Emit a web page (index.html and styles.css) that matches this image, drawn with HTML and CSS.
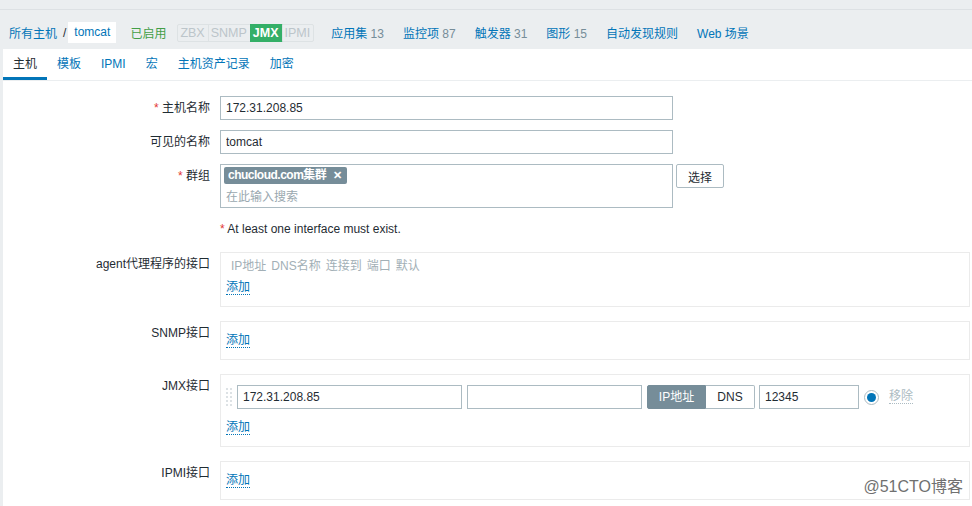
FILE: index.html
```html
<!DOCTYPE html>
<html lang="zh-CN">
<head>
    <meta charset="UTF-8">
    <title>主机</title>
    <link rel="stylesheet" href="styles.css">
</head>
<body>
    <div class="top-line"></div>
    <div class="header-nav">
        <a class="crumb" href="#">所有主机</a>
        <span class="crumb-sep">/</span>
        <span class="crumb-current">tomcat</span>
        <span class="status-on">已启用</span>
        <span class="avail">
            <span class="avail-item">ZBX</span>
            <span class="avail-item">SNMP</span>
            <span class="avail-item on">JMX</span>
            <span class="avail-item">IPMI</span>
        </span>
        <a class="nav-link" href="#">应用集 <span class="count">13</span></a>
        <a class="nav-link" href="#">监控项 <span class="count">87</span></a>
        <a class="nav-link" href="#">触发器 <span class="count">31</span></a>
        <a class="nav-link" href="#">图形 <span class="count">15</span></a>
        <a class="nav-link" href="#">自动发现规则</a>
        <a class="nav-link" href="#">Web 场景</a>
    </div>

    <div class="panel">
        <ul class="tabs">
            <li class="active">主机</li>
            <li>模板</li>
            <li>IPMI</li>
            <li>宏</li>
            <li>主机资产记录</li>
            <li>加密</li>
        </ul>

        <div class="form">
            <div class="form-row">
                <label class="form-label"><span class="req">*</span> 主机名称</label>
                <input class="text-input wide" type="text" value="172.31.208.85">
            </div>
            <div class="form-row">
                <label class="form-label">可见的名称</label>
                <input class="text-input wide" type="text" value="tomcat">
            </div>
            <div class="form-row">
                <label class="form-label"><span class="req">*</span> 群组</label>
                <div class="multiselect">
                    <span class="tag">chucloud.com集群 <span class="tag-x">✕</span></span>
                    <span class="placeholder">在此输入搜索</span>
                </div>
                <button class="btn-select">选择</button>
            </div>
            <div class="form-row msg-row">
                <span class="form-label"></span>
                <span class="msg"><span class="req">*</span> At least one interface must exist.</span>
            </div>

            <div class="form-row iface-row">
                <label class="form-label top">agent代理程序的接口</label>
                <div class="iface-box">
                    <div class="iface-head">
                        <span>IP地址</span><span>DNS名称</span><span>连接到</span><span>端口</span><span>默认</span>
                    </div>
                    <div class="add-row"><a class="link-add" href="#">添加</a></div>
                </div>
            </div>
            <div class="form-row iface-row">
                <label class="form-label top">SNMP接口</label>
                <div class="iface-box">
                    <div class="add-row"><a class="link-add" href="#">添加</a></div>
                </div>
            </div>
            <div class="form-row iface-row">
                <label class="form-label top">JMX接口</label>
                <div class="iface-box">
                    <div class="iface-line">
                        <svg class="drag" width="7" height="20" viewBox="0 0 7 20">
                            <g fill="#dde2e5">
                                <rect x="0" y="1" width="2" height="2"/><rect x="4" y="1" width="2" height="2"/>
                                <rect x="0" y="5" width="2" height="2"/><rect x="4" y="5" width="2" height="2"/>
                                <rect x="0" y="9" width="2" height="2"/><rect x="4" y="9" width="2" height="2"/>
                                <rect x="0" y="13" width="2" height="2"/><rect x="4" y="13" width="2" height="2"/>
                                <rect x="0" y="17" width="2" height="2"/><rect x="4" y="17" width="2" height="2"/>
                            </g>
                        </svg>
                        <input class="text-input ip" type="text" value="172.31.208.85">
                        <input class="text-input dns" type="text" value="">
                        <span class="seg">
                            <span class="seg-item on">IP地址</span>
                            <span class="seg-item">DNS</span>
                        </span>
                        <input class="text-input port" type="text" value="12345">
                        <span class="radio"><span class="radio-dot"></span></span>
                        <a class="link-remove" href="#">移除</a>
                    </div>
                    <div class="add-row"><a class="link-add" href="#">添加</a></div>
                </div>
            </div>
            <div class="form-row iface-row">
                <label class="form-label top">IPMI接口</label>
                <div class="iface-box">
                    <div class="add-row"><a class="link-add" href="#">添加</a></div>
                </div>
            </div>
        </div>
    </div>

    <div class="watermark">@51CTO博客</div>
</body>
</html>
```

FILE: styles.css
```css
body {
    font-family: "Liberation Sans", Arial, "Noto Sans CJK SC", sans-serif;
    font-size: 12px;
    color: #1f2c33;
    margin: 0;
    padding: 0;
    background-color: #ebeef0;
    height: 506px;
    overflow: hidden;
}
a {
    color: #0275b8;
    text-decoration: none;
}
.top-line {
    height: 9px;
    border-bottom: 1px solid #dde1e4;
}
.header-nav {
    display: flex;
    align-items: center;
    height: 21px;
    padding: 12px 0 6px 9px;
    white-space: nowrap;
}
.crumb-sep {
    margin: 0 2px 0 6px;
}
.crumb-current {
    background-color: #fff;
    color: #0275b8;
    height: 21px;
    line-height: 21px;
    padding: 0 6px;
}
.status-on {
    color: #429e47;
    margin-left: 14px;
}
.avail {
    display: flex;
    margin-left: 11px;
    margin-right: 17px;
}
.avail-item {
    height: 16px;
    line-height: 16px;
    padding: 0 3px 0 2px;
    border: 1px solid #dde2e4;
    margin-left: -1px;
    color: #bcc5ca;
    background-color: #ebeef0;
    font-size: 12.5px;
}
.avail-item:first-child {
    margin-left: 0;
    border-radius: 2px 0 0 2px;
}
.avail-item:last-child {
    border-radius: 0 2px 2px 0;
}
.avail-item.on {
    background-color: #34af67;
    border-color: #34af67;
    color: #fff;
    font-weight: bold;
}
.nav-link {
    margin-right: 19px;
}
.count {
    color: #768d99;
}
.panel {
    margin-left: 3px;
    background-color: #fff;
    height: 460px;
}
.tabs {
    list-style: none;
    margin: 0;
    padding: 0;
    display: flex;
    height: 31px;
    border-bottom: 1px solid #ebeef0;
}
.tabs li {
    padding: 0 10px;
    line-height: 31px;
    color: #0275b8;
    border-bottom: 3px solid transparent;
    height: 28px;
}
.tabs li.active {
    color: #1f2c33;
    border-bottom-color: #0275b8;
}
.form {
    padding-top: 15px;
}
.form-row {
    display: flex;
    align-items: flex-start;
    margin-bottom: 10px;
}
.form-label {
    width: 207px;
    flex: none;
    padding-right: 10px;
    text-align: right;
    line-height: 24px;
}
.form-label.top {
    line-height: 14px;
    padding-top: 5px;
}
.req {
    color: #e33734;
}
.text-input {
    box-sizing: border-box;
    height: 24px;
    border: 1px solid #acbbc2;
    padding: 0 5px;
    font-family: inherit;
    font-size: 12px;
    color: #1f2c33;
    background-color: #fff;
    outline: none;
    margin: 0;
}
.wide {
    width: 453px;
}
.multiselect {
    box-sizing: border-box;
    width: 453px;
    height: 44px;
    border: 1px solid #acbbc2;
    padding: 2px 3px;
    display: flex;
    flex-direction: column;
    align-items: flex-start;
}
.tag {
    background-color: #768d99;
    color: #fff;
    font-weight: bold;
    letter-spacing: -0.5px;
    height: 17px;
    line-height: 17px;
    padding: 0 5px 0 4px;
    border-radius: 2px;
}
.tag-x {
    margin-left: 4px;
    font-size: 11px;
    letter-spacing: 0;
}
.placeholder {
    color: #9aa8af;
    margin: 3px 0 0 2px;
}
.btn-select {
    margin-left: 3px;
    width: 48px;
    height: 24px;
    background-color: #fff;
    border: 1px solid #acbbc2;
    border-radius: 2px;
    font-family: inherit;
    font-size: 12px;
    color: #1f2c33;
    padding: 0;
}
.msg-row {
    height: 24px;
    line-height: 23px;
}
.iface-row {
    margin-bottom: 14px;
}
.iface-box {
    flex: 1;
    margin-right: 2px;
    border: 1px solid #ebebeb;
    padding: 5px;
}
.iface-head {
    display: flex;
    gap: 5px;
    height: 16px;
    line-height: 16px;
    padding-left: 5px;
    color: #a2afb6;
}
.add-row {
    height: 27px;
    display: flex;
    align-items: center;
}
.link-add {
    border-bottom: 1px dotted #0275b8;
    line-height: 13px;
}
.iface-line {
    display: flex;
    align-items: center;
    height: 34px;
}
.drag {
    margin-right: 4px;
}
.ip {
    width: 225px;
}
.dns {
    width: 175px;
    margin-left: 5px;
}
.seg {
    display: flex;
    margin-left: 5px;
}
.seg-item {
    box-sizing: border-box;
    height: 24px;
    line-height: 22px;
    width: 49px;
    text-align: center;
    border: 1px solid #acbbc2;
    border-left: none;
    border-radius: 0 2px 2px 0;
}
.seg-item.on {
    width: 59px;
    background-color: #768d99;
    border: 1px solid #768d99;
    border-radius: 2px 0 0 2px;
    color: #fff;
}
.port {
    width: 100px;
    margin-left: 4px;
}
.radio {
    box-sizing: border-box;
    width: 15px;
    height: 15px;
    margin-left: 5px;
    border: 1px solid #acbbc2;
    border-radius: 50%;
    display: flex;
    align-items: center;
    justify-content: center;
}
.radio-dot {
    width: 9px;
    height: 9px;
    border-radius: 50%;
    background-color: #0275b8;
}
.link-remove {
    margin-left: 10px;
    color: #acbbc2;
    border-bottom: 1px dotted #acbbc2;
    line-height: 13px;
}
.watermark {
    position: absolute;
    right: 9px;
    bottom: 9px;
    font-size: 16px;
    color: #707070;
    text-shadow: 0 0 2px #fff;
}
```
